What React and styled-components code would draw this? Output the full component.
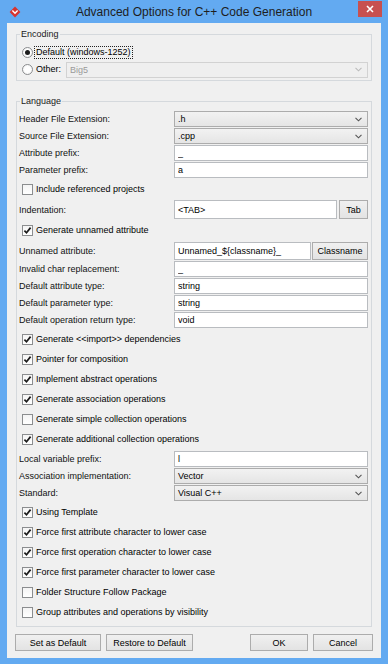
import React from 'react';
import styled, { createGlobalStyle } from 'styled-components';

const GlobalStyle = createGlobalStyle`
  html, body {
    margin: 0;
    padding: 0;
    background: #ffffff;
  }
  body {
    font-family: "Liberation Sans", Arial, sans-serif;
    font-size: 9px;
    color: #000;
  }
  * {
    box-sizing: border-box;
  }
`;

// Window chrome
const Frame = styled.div`
  width: 388px;
  height: 664px;
  background: #63aaf1;
  padding: 0 7px 6px;
  display: flex;
  flex-direction: column;
`;

const TitleBar = styled.div`
  flex: none;
  height: 23px;
  display: grid;
  grid-template-columns: 1fr auto 1fr;
  align-items: center;
`;

const Title = styled.div`
  font-size: 12px;
  color: #1e1e1e;
  white-space: nowrap;
`;

const LogoSlot = styled.div`
  display: flex;
  align-items: center;
  padding-left: 2px;
`;

const CloseButton = styled.div`
  justify-self: end;
  align-self: start;
  margin: 1px -1px 0 0;
  width: 24px;
  height: 16px;
  background: #c75050;
  display: grid;
  place-items: center;
`;

const Content = styled.div`
  flex: 1;
  background: #f0f0f0;
  padding: 6px 8px 0;
  display: flex;
  flex-direction: column;
`;

// Group boxes
const Group = styled.fieldset`
  margin: ${p => p.$mt || 0}px 1px 0;
  padding: 0;
  min-width: 0;
  border: 1px solid #d5d9dd;
`;

const Legend = styled.legend`
  margin-left: 3px;
  padding: 0 1px;
  line-height: 11px;
  font-size: 9px;
  color: #1a1a1a;
`;

const GroupBody = styled.div`
  display: flex;
  flex-direction: column;
  padding: ${p => p.$pad};
`;

// Rows
const FieldRow = styled.div`
  display: grid;
  grid-template-columns: 155px 1fr;
  align-items: ${p => (p.$h > 17 ? 'center' : 'start')};
  height: ${p => p.$h || 17}px;
  margin-top: ${p => p.$mt || 0}px;
`;

const Label = styled.div`
  line-height: 16px;
  white-space: nowrap;
  color: #111;
`;

const Controls = styled.div`
  display: flex;
  gap: ${p => p.$gap || 0}px;
`;

const TextInput = styled.input`
  flex: 1;
  min-width: 0;
  width: 100%;
  height: ${p => p.$h || 16}px;
  border: 1px solid #b9bcc0;
  background: #fff;
  font: inherit;
  color: #000;
  padding: 0 3px;
  margin: 0;
  outline: none;
`;

const ComboBox = styled.div`
  flex: 1;
  height: 16px;
  margin-left: ${p => p.$ml || 0}px;
  border: 1px solid ${p => (p.$disabled ? '#d2d2d2' : '#acacac')};
  background: ${p =>
    p.$disabled ? '#efefef' : 'linear-gradient(#f2f2f2, #e5e5e5)'};
  color: ${p => (p.$disabled ? '#9a9a9a' : '#000')};
  display: flex;
  align-items: center;
  justify-content: space-between;
  padding: 0 5px 0 3px;
  line-height: 14px;
`;

const PushButton = styled.button`
  flex: none;
  width: ${p => p.$w}px;
  height: ${p => p.$h || 17}px;
  margin: 0;
  padding: 0;
  border: 1px solid #acacac;
  background: linear-gradient(#f0f0f0, #e3e3e3);
  font: inherit;
  color: #000;
`;

const CheckRow = styled.div`
  display: flex;
  align-items: center;
  gap: 3px;
  height: 20px;
  padding-left: 3px;
  white-space: nowrap;
`;

const Box = styled.span`
  flex: none;
  width: 11px;
  height: 11px;
  border: 1px solid #8b8d8f;
  background: linear-gradient(#f4f4f4, #ffffff);
  display: grid;
  place-items: center;
`;

const RadioRow = styled.div`
  display: flex;
  align-items: center;
  gap: 1px;
  height: ${p => p.$h}px;
  white-space: nowrap;
`;

const RadioCircle = styled.span`
  flex: none;
  width: 11px;
  height: 11px;
  border-radius: 50%;
  border: 1px solid #8b8d8f;
  background: radial-gradient(circle, #ffffff 40%, #ececec 100%);
  display: grid;
  place-items: center;

  &::after {
    content: '';
    width: 5px;
    height: 5px;
    border-radius: 50%;
    background: ${p => (p.$on ? '#1b1b1b' : 'transparent')};
  }
`;

const RadioText = styled.span`
  padding: 0 1px;
  line-height: 11px;
  border: 1px ${p => (p.$focus ? 'dotted #222' : 'solid transparent')};
`;

const ButtonBar = styled.div`
  display: flex;
  gap: 5px;
  margin-top: 7px;
`;

const Spacer = styled.div`
  flex: 1;
`;

const Logo = () => (
  <svg width="12" height="12" viewBox="0 0 12 12">
    <path d="M6 0.6 L11.4 6 L6 11.4 L0.6 6 Z" fill="#d8342f" strokeLinejoin="round" />
    <path d="M3.4 4.6 L6 7.2 L8.6 4.6" fill="none" stroke="#fff" strokeWidth="1.4" />
  </svg>
);

const Chevron = ({ color = '#555' }) => (
  <svg width="7" height="5" viewBox="0 0 7 5">
    <path d="M0.5 0.8 L3.5 3.8 L6.5 0.8" fill="none" stroke={color} strokeWidth="1.1" />
  </svg>
);

const Check = ({ checked, children }) => (
  <CheckRow>
    <Box>
      {checked && (
        <svg width="9" height="9" viewBox="0 0 9 9">
          <path d="M1.4 4.6 L3.5 6.8 L7.6 1.6" fill="none" stroke="#1b1b1b" strokeWidth="1.7" />
        </svg>
      )}
    </Box>
    <span>{children}</span>
  </CheckRow>
);

const Combo = ({ value, disabled, ml }) => (
  <ComboBox $disabled={disabled} $ml={ml}>
    <span>{value}</span>
    <Chevron color={disabled ? '#bbb' : '#555'} />
  </ComboBox>
);

const Field = ({ label, value, mt }) => (
  <FieldRow $mt={mt}>
    <Label>{label}</Label>
    <TextInput readOnly value={value} />
  </FieldRow>
);

const Select = ({ label, value, mt }) => (
  <FieldRow $mt={mt}>
    <Label>{label}</Label>
    <Combo value={value} />
  </FieldRow>
);

export default function App() {
  return (
    <>
      <GlobalStyle />
      <Frame>
        <TitleBar>
          <LogoSlot>
            <Logo />
          </LogoSlot>
          <Title>Advanced Options for C++ Code Generation</Title>
          <CloseButton>
            <svg width="8" height="8" viewBox="0 0 8 8">
              <path d="M1 1 L7 7 M7 1 L1 7" stroke="#fff" strokeWidth="1.6" />
            </svg>
          </CloseButton>
        </TitleBar>

        <Content>
          <Group>
            <Legend>Encoding</Legend>
            <GroupBody $pad="3px 3px 2px 5px">
              <RadioRow $h={18}>
                <RadioCircle $on />
                <RadioText $focus>Default (windows-1252)</RadioText>
              </RadioRow>
              <RadioRow $h={17}>
                <RadioCircle />
                <RadioText>Other:</RadioText>
                <Combo value="Big5" disabled ml={2} />
              </RadioRow>
            </GroupBody>
          </Group>

          <Group $mt={15}>
            <Legend>Language</Legend>
            <GroupBody $pad="4px 3px 4px 2px">
              <Select label="Header File Extension:" value=".h" />
              <Select label="Source File Extension:" value=".cpp" />
              <Field label="Attribute prefix:" value="_" />
              <Field label="Parameter prefix:" value="a" />
              <Check>Include referenced projects</Check>

              <FieldRow $h={21}>
                <Label>Indentation:</Label>
                <Controls $gap={2}>
                  <TextInput readOnly value="<TAB>" $h={19} />
                  <PushButton $w={29} $h={19}>Tab</PushButton>
                </Controls>
              </FieldRow>
              <Check checked>Generate unnamed attribute</Check>
              <FieldRow $h={21}>
                <Label>Unnamed attribute:</Label>
                <Controls $gap={1}>
                  <TextInput readOnly value="Unnamed_${classname}_" $h={18} />
                  <PushButton $w={56} $h={18}>Classname</PushButton>
                </Controls>
              </FieldRow>

              <Field label="Invalid char replacement:" value="_" />
              <Field label="Default attribute type:" value="string" />
              <Field label="Default parameter type:" value="string" />
              <Field label="Default operation return type:" value="void" />

              <Check checked>Generate &lt;&lt;import&gt;&gt; dependencies</Check>
              <Check checked>Pointer for composition</Check>
              <Check checked>Implement abstract operations</Check>
              <Check checked>Generate association operations</Check>
              <Check>Generate simple collection operations</Check>
              <Check checked>Generate additional collection operations</Check>

              <Field label="Local variable prefix:" value="l" mt={2} />
              <Select label="Association implementation:" value="Vector" />
              <Select label="Standard:" value="Visual C++" />

              <Check checked>Using Template</Check>
              <Check checked>Force first attribute character to lower case</Check>
              <Check checked>Force first operation character to lower case</Check>
              <Check checked>Force first parameter character to lower case</Check>
              <Check>Folder Structure Follow Package</Check>
              <Check>Group attributes and operations by visibility</Check>
            </GroupBody>
          </Group>

          <ButtonBar>
            <PushButton $w={86}>Set as Default</PushButton>
            <PushButton $w={87}>Restore to Default</PushButton>
            <Spacer />
            <PushButton $w={58}>OK</PushButton>
            <PushButton $w={60}>Cancel</PushButton>
          </ButtonBar>
        </Content>
      </Frame>
    </>
  );
}
